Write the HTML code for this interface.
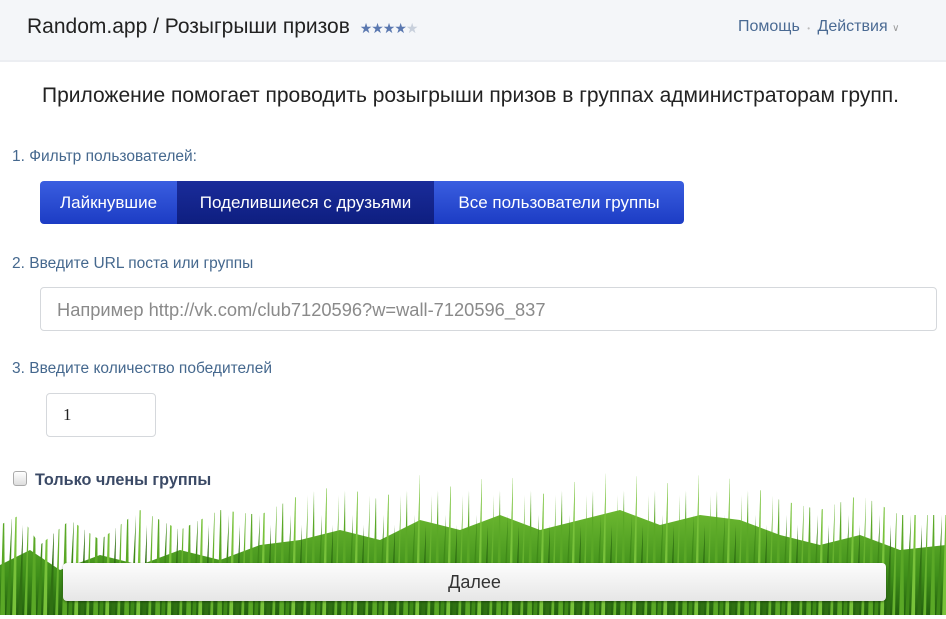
<!DOCTYPE html>
<html><head><meta charset="utf-8"><style>
body{margin:0;width:946px;height:619px;background:#fff;position:relative;overflow:hidden;font-family:"Liberation Sans",sans-serif;}
.a{position:absolute;white-space:nowrap;}
.hdr{position:absolute;left:0;top:0;width:946px;height:60px;background:#f4f6f9;border-bottom:2px solid #eceef2;}
.lbl{font-size:15.5px;color:#45688e;}
.btn{position:absolute;top:181px;height:43px;color:#fff;font-size:17px;line-height:43px;text-align:center;background:linear-gradient(#3a5ee0,#1c3cc4);}
</style></head><body>
<div class="hdr"></div>
<div class="a" style="left:27px;top:15px;font-size:21px;color:#222;">Random.app / Розыгрыши призов <span style="font-size:14px;color:#5a78b0;letter-spacing:-1px;margin-left:4px;">★★★★<span style="color:#c8d0dc">★</span></span></div>
<div class="a" style="left:738px;top:18px;font-size:16px;color:#4a6a93;">Помощь <span style="color:#bbb;font-size:8px;margin:0 3px;">•</span> Действия <span style="font-size:10px;color:#999">&#x2228;</span></div>
<div class="a" style="left:42px;top:84px;font-size:21px;color:#222;">Приложение помогает проводить розыгрыши призов в группах администраторам групп.</div>
<div class="a lbl" style="left:12px;top:148px;">1. Фильтр пользователей:</div>
<div class="btn" style="left:40px;width:137px;border-radius:4px 0 0 4px;">Лайкнувшие</div>
<div class="btn" style="left:177px;width:257px;background:linear-gradient(#1a2c9a,#0e1e80);">Поделившиеся с друзьями</div>
<div class="btn" style="left:434px;width:250px;border-radius:0 4px 4px 0;">Все пользователи группы</div>
<div class="a lbl" style="left:12px;top:255px;">2. Введите URL поста или группы</div>
<div class="a" style="left:40px;top:287px;width:897px;height:44px;border:1px solid #d5d8dc;border-radius:4px;box-sizing:border-box;"></div>
<div class="a" style="left:57px;top:299px;font-size:18.3px;color:#8a8a8a;">Например http://vk.com/club7120596?w=wall-7120596_837</div>
<div class="a lbl" style="left:12px;top:360px;">3. Введите количество победителей</div>
<div class="a" style="left:46px;top:393px;width:110px;height:44px;border:1px solid #d5d8dc;border-radius:4px;box-sizing:border-box;"></div>
<div class="a" style="left:63px;top:405px;font-size:17px;color:#222;font-family:'Liberation Serif',serif;">1</div>
<svg class="a" style="left:0;top:470px" width="946" height="149">
<defs>
<linearGradient id="g" x1="0" y1="0" x2="0" y2="1"><stop offset="0" stop-color="#6cb830"/><stop offset=".6" stop-color="#3f8f1a"/><stop offset="1" stop-color="#1f5a0c"/></linearGradient>
<pattern id="p" width="31" height="149" patternUnits="userSpaceOnUse">
<polygon points="0,149 4,20 5,149" fill="#5aa826"/>
<polygon points="6,149 12,45 10,149" fill="#3f8a18"/>
<polygon points="12,149 17,0 16,149" fill="#78c23a"/>
<polygon points="18,149 23,55 22,149" fill="#2f7012"/>
<polygon points="24,149 29,25 27,149" fill="#66b22e"/>
</pattern>
</defs>
<polygon fill="url(#g)" points="0,149 0,95 30,80 60,100 100,85 140,95 180,80 220,90 260,75 300,70 340,60 380,70 420,50 460,60 500,45 540,60 580,50 620,40 660,55 700,45 740,50 780,65 820,75 860,65 900,80 946,75 946,149"/>
<polygon fill="url(#p)" points="0,149 0,55 20,45 40,75 70,50 100,70 140,40 180,60 220,40 260,45 300,25 340,15 380,30 420,5 460,20 500,0 540,25 580,10 620,0 660,15 700,5 740,10 780,30 820,40 860,25 900,45 946,45 946,149"/>
<rect x="0" y="145" width="946" height="4" fill="#fff"/>
</svg>
<div class="a" style="left:13px;top:471px;width:12px;height:13px;border:1px solid #aaa;border-radius:3px;background:linear-gradient(#fff,#ddd);"></div>
<div class="a" style="left:35px;top:471px;font-size:16.2px;font-weight:bold;color:#3b4a66;">Только члены группы</div>
<div class="a" style="left:63px;top:563px;width:823px;height:38px;border-radius:4px;background:linear-gradient(#fdfdfd,#e6e6e6);box-shadow:0 1px 2px rgba(0,0,0,.4);text-align:center;line-height:38px;font-size:18px;color:#333;">Далее</div>
</body></html>
